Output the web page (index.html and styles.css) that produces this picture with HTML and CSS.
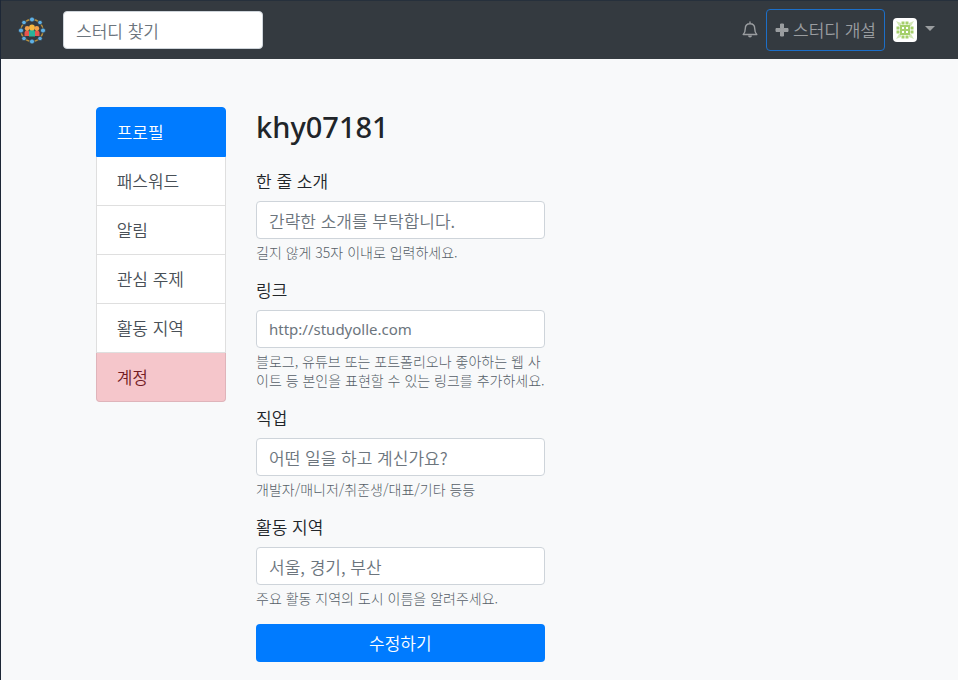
FILE: index.html
```html
<!DOCTYPE html>
<html lang="ko">
<head>
<meta charset="utf-8">
<meta name="viewport" content="width=device-width, initial-scale=1">
<title>스터디올래</title>
<link rel="stylesheet" href="styles.css">
</head>
<body>
<nav class="navbar">
  <a class="brand" href="#" aria-label="홈">
    <svg width="30" height="30" viewBox="0 0 30 30" aria-hidden="true">
      <circle cx="15" cy="15.500" r="11" fill="none" stroke="#b8913f" stroke-width="1.300"/>
      <g fill="#5eb0e5" stroke="#343a40" stroke-width=".8">
        <circle cx="15" cy="4.500" r="2.500"/><circle cx="23" cy="7.500" r="2.300"/><circle cx="26" cy="15.500" r="2.500"/><circle cx="23" cy="23.500" r="2.300"/>
        <circle cx="15" cy="26.500" r="2.500"/><circle cx="7" cy="23.500" r="2.300"/><circle cx="4" cy="15.500" r="2.500"/><circle cx="7" cy="7.500" r="2.300"/>
      </g>
      <path d="M7.500 21v-3q0-2.500 2.500-2.500t2.500 2.500V21z" fill="#e8564f"/>
      <path d="M17.500 21v-3q0-2.500 2.500-2.500t2.500 2.500V21z" fill="#e8564f"/>
      <circle cx="10.200" cy="13.500" r="2.400" fill="#f3a04b"/>
      <circle cx="19.800" cy="13.500" r="2.400" fill="#f3a04b"/>
      <path d="M12 21.500v-4q0-3 3-3t3 3v4z" fill="#2bb39a"/>
      <circle cx="15" cy="12.500" r="2.900" fill="#f6b83f"/>
    </svg>
  </a>
  <form class="search"><input class="control" type="search" placeholder="스터디 찾기" aria-label="스터디 찾기"></form>
  <div class="actions">
    <a class="bell" href="#" aria-label="알림">
      <svg width="16" height="18" viewBox="0 0 16 18" aria-hidden="true">
        <path d="M8 1v1.500M1.200 13.500C3 11.800 3.300 10 3.300 7.500C3.300 4.500 5.200 2.700 8 2.700s4.700 1.800 4.700 4.800c0 2.500.3 4.300 2.100 6z" fill="none" stroke="#9a9da0" stroke-width="1.400" stroke-linecap="round" stroke-linejoin="round"/>
        <path d="M6 14.500a2 2 0 0 0 4 0z" fill="#9a9da0"/>
      </svg>
    </a>
    <a class="create" href="#">
      <svg width="14" height="14" viewBox="0 0 14 14" aria-hidden="true"><path d="M5.500 1h3v4.500H13v3H8.500V13h-3V8.500H1v-3h4.500z" fill="#9a9da0" stroke="#9a9da0" stroke-linejoin="round"/></svg>
      스터디 개설
    </a>
    <button class="account" type="button" aria-label="계정 메뉴">
      <svg class="avatar" width="24" height="24" viewBox="0 0 24 24" aria-hidden="true">
        <rect width="24" height="24" rx="4" fill="#fff"/>
        <g fill="#a5cf6b">
          <path d="M3 3l5 2v3H6zM21 3l-5 2v3h2zM3 21l5-2v-3H6zM21 21l-5-2v-3h2z" opacity=".5"/>
          <path d="M8.500 3.500h3v3h-3zM12.500 3.500h3v3h-3zM8.500 17.500h3v3h-3zM12.500 17.500h3v3h-3zM3.500 8.500h3v3h-3zM3.500 12.500h3v3h-3zM17.500 8.500h3v3h-3zM17.500 12.500h3v3h-3z"/>
          <path fill-rule="evenodd" d="M7 7h10v10H7zM9 9h2v2H9zM13 9h2v2h-2zM9 13h2v2H9zM13 13h2v2h-2z"/>
        </g>
      </svg>
      <span class="caret"></span>
    </button>
  </div>
</nav>
<main class="layout">
  <nav class="menu" aria-label="설정">
    <a class="item active" href="#">프로필</a>
    <a class="item" href="#">패스워드</a>
    <a class="item" href="#">알림</a>
    <a class="item" href="#">관심 주제</a>
    <a class="item" href="#">활동 지역</a>
    <a class="item danger" href="#">계정</a>
  </nav>
  <section class="profile">
    <h2>khy07181</h2>
    <form>
      <div class="group">
        <label for="bio">한 줄 소개</label>
        <input class="control" id="bio" type="text" placeholder="간략한 소개를 부탁합니다.">
        <small>길지 않게 35자 이내로 입력하세요.</small>
      </div>
      <div class="group">
        <label for="url">링크</label>
        <input class="control" id="url" type="url" placeholder="http://studyolle.com">
        <small>블로그, 유튜브 또는 포트폴리오나 좋아하는 웹 사이트 등 본인을 표현할 수 있는 링크를 추가하세요.</small>
      </div>
      <div class="group">
        <label for="job">직업</label>
        <input class="control" id="job" type="text" placeholder="어떤 일을 하고 계신가요?">
        <small>개발자/매니저/취준생/대표/기타 등등</small>
      </div>
      <div class="group">
        <label for="location">활동 지역</label>
        <input class="control" id="location" type="text" placeholder="서울, 경기, 부산">
        <small>주요 활동 지역의 도시 이름을 알려주세요.</small>
      </div>
      <button class="submit" type="submit">수정하기</button>
    </form>
  </section>
</main>
</body>
</html>
```
FILE: styles.css
```css
*, *::before, *::after { box-sizing: border-box; }

body {
  margin: 0;
  min-height: 100vh;
  border-left: 1px solid #1d2736;
  background: #f8f9fa;
  color: #212529;
  font: 350 17px/24px "Noto Sans CJK KR", sans-serif;
}

a { color: inherit; text-decoration: none; }
svg { display: block; }

.navbar {
  display: flex;
  align-items: center;
  padding: 8px 16px;
  border-top: 1px solid #26303c;
  background: #343a40;
}

.brand { margin-right: 16px; }
.search { width: 200px; }

.control {
  display: block;
  width: 100%;
  height: 38px;
  padding: 6px 12px;
  border: 1px solid #ced4da;
  border-radius: 4px;
  background: #fff;
  color: #495057;
  font: inherit;
}

.control::placeholder { color: #6c757d; opacity: 1; }
#url { font-family: "Noto Sans", sans-serif; font-size: 15px; font-weight: 400; }

.actions {
  display: flex;
  align-items: center;
  margin-left: auto;
  gap: 8px;
  color: #9a9da0;
}

.create {
  display: flex;
  align-items: center;
  gap: 4px;
  padding: 8px;
  border: 1px solid #1c6fc9;
  border-radius: 4px;
}

.account {
  display: flex;
  align-items: center;
  gap: 8px;
  padding: 0 7px 0 0;
  border: 0;
  background: none;
}

.caret {
  margin-bottom: 4px;
  border: 5px solid transparent;
  border-top-color: #9a9da0;
  border-bottom: 0;
}

.layout {
  display: grid;
  grid-template-columns: 1fr 2fr 4fr 5fr;
  padding: 48px 0 16px 1px;
}

.menu { grid-column: 2; margin: 0 15px 0 14px; }

.item {
  display: block;
  padding: 12px 20px;
  border: 1px solid #dfdfdf;
  border-top-width: 0;
  background: #fff;
  color: #495057;
}

.item.active {
  border: 1px solid #007bff;
  border-radius: 4px 4px 0 0;
  background: #007bff;
  color: #fff;
}

.item.danger {
  border-color: #dfb4ba;
  border-radius: 0 0 4px 4px;
  background: #f5c6cb;
  color: #721c24;
}

.profile { grid-column: 3; margin: 0 15px; }

h2 {
  margin: 0 0 22px;
  font: 500 29px/40px "Noto Sans", sans-serif;
}

.group { margin-bottom: 16px; }
label { display: block; margin-bottom: 8px; }

small {
  display: block;
  margin-top: 4px;
  color: #565f68;
  font-size: 14px;
  font-weight: 300;
  line-height: 19px;
}

.submit {
  display: block;
  width: 100%;
  padding: 7px 12px;
  border: 0;
  border-radius: 4px;
  background: #007bff;
  color: #fff;
  font: inherit;
}
```
